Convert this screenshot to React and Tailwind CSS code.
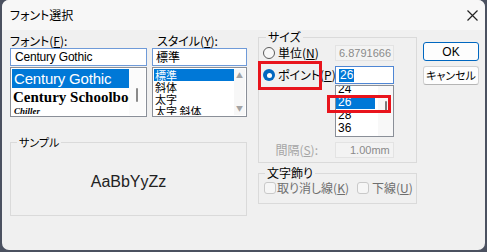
import React from 'react';

const jp = "font-['Noto_Sans_CJK_JP',sans-serif] [font-feature-settings:'palt']";

const Radio = ({ checked }) =>
    checked ? (
        <span className="w-[12px] h-[12px] rounded-full bg-[#0067c0] flex items-center justify-center shrink-0">
            <span className="w-[5px] h-[5px] rounded-full bg-white" />
        </span>
    ) : (
        <span className="w-[12px] h-[12px] rounded-full border border-[#5b5b5b] bg-[#f8f8f8] shrink-0" />
    );

const Check = () => (
    <span className="block w-[12px] h-[12px] rounded-[3px] border border-[#c9c9c9] bg-[#f6f6f6] shrink-0" />
);

const App = () => {
    return (
        <div className={`w-[487px] h-[252px] bg-[#4b5160] px-[2px] pb-[2px] ${jp} text-[12px] text-black`}>
            <div className="w-full h-full rounded-[7px] bg-[#f0f0f0] flex flex-col overflow-hidden">
                {/* title bar */}
                <div className="h-[30px] bg-[#f7f7f7] flex items-center justify-between pl-[8px] pr-[6px] shrink-0">
                    <span className="text-[12px] leading-none">フォント選択</span>
                    <svg width="13" height="13" viewBox="0 0 13 13">
                        <path d="M1.5 1.5 L11.5 11.5 M11.5 1.5 L1.5 11.5" stroke="#222" strokeWidth="1.2" />
                    </svg>
                </div>

                <div className="flex pl-[8px]">
                    {/* left block */}
                    <div className="w-[237px] shrink-0">
                        <div className="flex gap-[5px] pt-[3px]">
                            <div className="w-[137px]">
                                <div className="h-[15px] leading-[15px]">フォント(<u>F</u>):</div>
                                <div className="h-[18px] border border-[#6f9ad8] bg-white flex items-center pl-[4px] text-[12px] font-['Liberation_Sans'] tracking-[-0.2px]">
                                    Century Gothic
                                </div>
                                <div className="mt-[1px] h-[50px] border border-[#8a8f98] bg-white flex p-[1px]">
                                    <div className="flex-1 overflow-hidden">
                                        <div className="h-[19px] bg-[#0078d7] text-white pl-[2px] text-[15px] leading-[19px] font-['Liberation_Sans'] tracking-[-0.2px] whitespace-nowrap">
                                            Century Gothic
                                        </div>
                                        <div className="h-[18px] pl-[1px] text-[15px] leading-[18px] font-['Liberation_Serif'] font-bold whitespace-nowrap">
                                            Century Schoolbook
                                        </div>
                                        <div className="h-[10px] pl-[2px] text-[9px] leading-[10px] font-['Liberation_Serif'] italic font-bold">
                                            Chiller
                                        </div>
                                    </div>
                                    <div className="w-[16px] bg-[#fbfbfb] flex justify-center pt-[19px]">
                                        <div className="w-[2px] h-[14px] bg-[#8a8a8a] rounded-full" />
                                    </div>
                                </div>
                            </div>
                            <div className="w-[95px]">
                                <div className="h-[15px] leading-[15px] pl-[5px]">スタイル(<u>Y</u>):</div>
                                <div className="h-[18px] border border-[#6f9ad8] bg-white flex items-center pl-[3px] text-[12px]">
                                    標準
                                </div>
                                <div className="mt-[1px] h-[50px] border border-[#8a8f98] bg-white flex p-[1px]">
                                    <div className="flex-1 overflow-hidden text-[11px] leading-[12px]">
                                        <div className="h-[12px] bg-[#0078d7] text-white pl-[1px]">標準</div>
                                        <div className="h-[12px] pl-[1px]">斜体</div>
                                        <div className="h-[12px] pl-[1px]">太字</div>
                                        <div className="h-[12px] pl-[1px]">太字 斜体</div>
                                    </div>
                                    <div className="w-[11px] bg-[#f7f7f7] flex flex-col items-center justify-between py-[3px] text-[7px] leading-none text-[#a3a3a3]">
                                        <span>▲</span>
                                        <span>▼</span>
                                    </div>
                                </div>
                            </div>
                        </div>

                        <fieldset className="mt-[18px] h-[81px] border border-[#dadada]">
                            <legend className="ml-[6px] px-[2px] text-[11px] leading-[15px]">サンプル</legend>
                            <div className="h-[58px] flex items-center justify-center pt-[6px] text-[16px] font-['Liberation_Sans'] text-[#222]">
                                AaBbYyZz
                            </div>
                        </fieldset>
                    </div>

                    {/* size column */}
                    <div className="w-[159px] ml-[11px] shrink-0">
                        <div className="relative">
                            <fieldset className="h-[133px] border border-[#dadada]">
                                <legend className="ml-[7px] px-[2px] leading-[14px]">サイズ</legend>
                                <div className="pl-[4px]">
                                    <div className="flex items-center h-[16px] mt-[1px]">
                                        <div className="w-[72px] flex items-center gap-[3px]">
                                            <Radio />
                                            <span>単位(<u>N</u>)</span>
                                        </div>
                                        <div className="w-[59px] h-[16px] border border-[#e3e3e3] bg-[#f3f3f3] text-[#8a8a8a] text-[11px] font-['Liberation_Sans'] leading-[14px] pl-[3px] overflow-hidden whitespace-nowrap">
                                            6.8791666
                                        </div>
                                    </div>
                                    <div className="flex items-center h-[18px] mt-[5px]">
                                        <div className="w-[72px] flex items-center gap-[3px]">
                                            <Radio checked />
                                            <span className="whitespace-nowrap">ポイント(<u>P</u>)</span>
                                        </div>
                                        <div className="w-[59px] h-[18px] border border-[#4f86d4] bg-white flex items-center pl-[3px] text-[12px] font-['Liberation_Sans']">
                                            <span className="bg-[#0078d7] text-white leading-[13px] px-[1px]">26</span>
                                        </div>
                                    </div>
                                    <div className="flex mt-[1px]">
                                        <div className="w-[72px]" />
                                        <div className="w-[59px] h-[52px] border border-[#8a8f98] bg-white flex overflow-hidden">
                                            <div className="flex-1 overflow-hidden text-[12px] font-['Liberation_Sans'] leading-[13px]">
                                                <div className="h-[13px] mt-[-3px] pl-[2px]">24</div>
                                                <div className="h-[13px] bg-[#0078d7] text-white pl-[2px] mr-[3px]">26</div>
                                                <div className="h-[13px] pl-[2px]">28</div>
                                                <div className="h-[13px] pl-[2px]">36</div>
                                            </div>
                                            <div className="w-[15px] bg-[#f8f8f8] flex justify-center pt-[15px]">
                                                <div className="w-[2px] h-[12px] bg-[#7a7a7a] rounded-full" />
                                            </div>
                                        </div>
                                    </div>
                                    <div className="flex items-center h-[16px] mt-[5px]">
                                        <div className="w-[72px] text-right pr-[17px] text-[#a5a5a5] whitespace-nowrap">
                                            間隔(<u>S</u>):
                                        </div>
                                        <div className="w-[59px] h-[16px] border border-[#e3e3e3] bg-[#f3f3f3] text-[#8a8a8a] text-[11px] font-['Liberation_Sans'] leading-[14px] pl-[14px]">
                                            1.00mm
                                        </div>
                                    </div>
                                </div>
                            </fieldset>
                            <div className="absolute left-0 top-[31px] w-[64px] h-[29px] border-[3px] border-[#e8141c]" />
                            <div className="absolute left-[69px] top-[65px] w-[64px] h-[18px] border-[3px] border-[#e8141c]" />
                        </div>

                        <fieldset className="mt-[3px] h-[38px] border border-[#dadada]">
                            <legend className="ml-[6px] px-[2px] leading-[14px]">文字飾り</legend>
                            <div className="flex items-center h-[14px] mt-[1px] pl-[5px] text-[#6e6e6e]">
                                <Check />
                                <span className="ml-[1px]">取り消し線(<u>K</u>)</span>
                                <span className="ml-[8px]"><Check /></span>
                                <span className="ml-[3px]">下線(<u>U</u>)</span>
                            </div>
                        </fieldset>
                    </div>

                    {/* buttons */}
                    <div className="w-[56px] ml-[6px] pt-[12px] shrink-0">
                        <button className="w-full h-[19px] rounded-[3px] border border-[#0067c0] bg-[#fdfdfd] text-[12px] leading-none font-['Liberation_Sans'] flex items-center justify-center">
                            OK
                        </button>
                        <button className="w-full h-[19px] mt-[5px] rounded-[3px] border border-[#d2d2d2] border-b-[#b5b5b5] bg-[#fdfdfd] text-[11px] leading-none flex items-center justify-center">
                            キャンセル
                        </button>
                    </div>
                </div>
            </div>
        </div>
    );
};

export default App;
